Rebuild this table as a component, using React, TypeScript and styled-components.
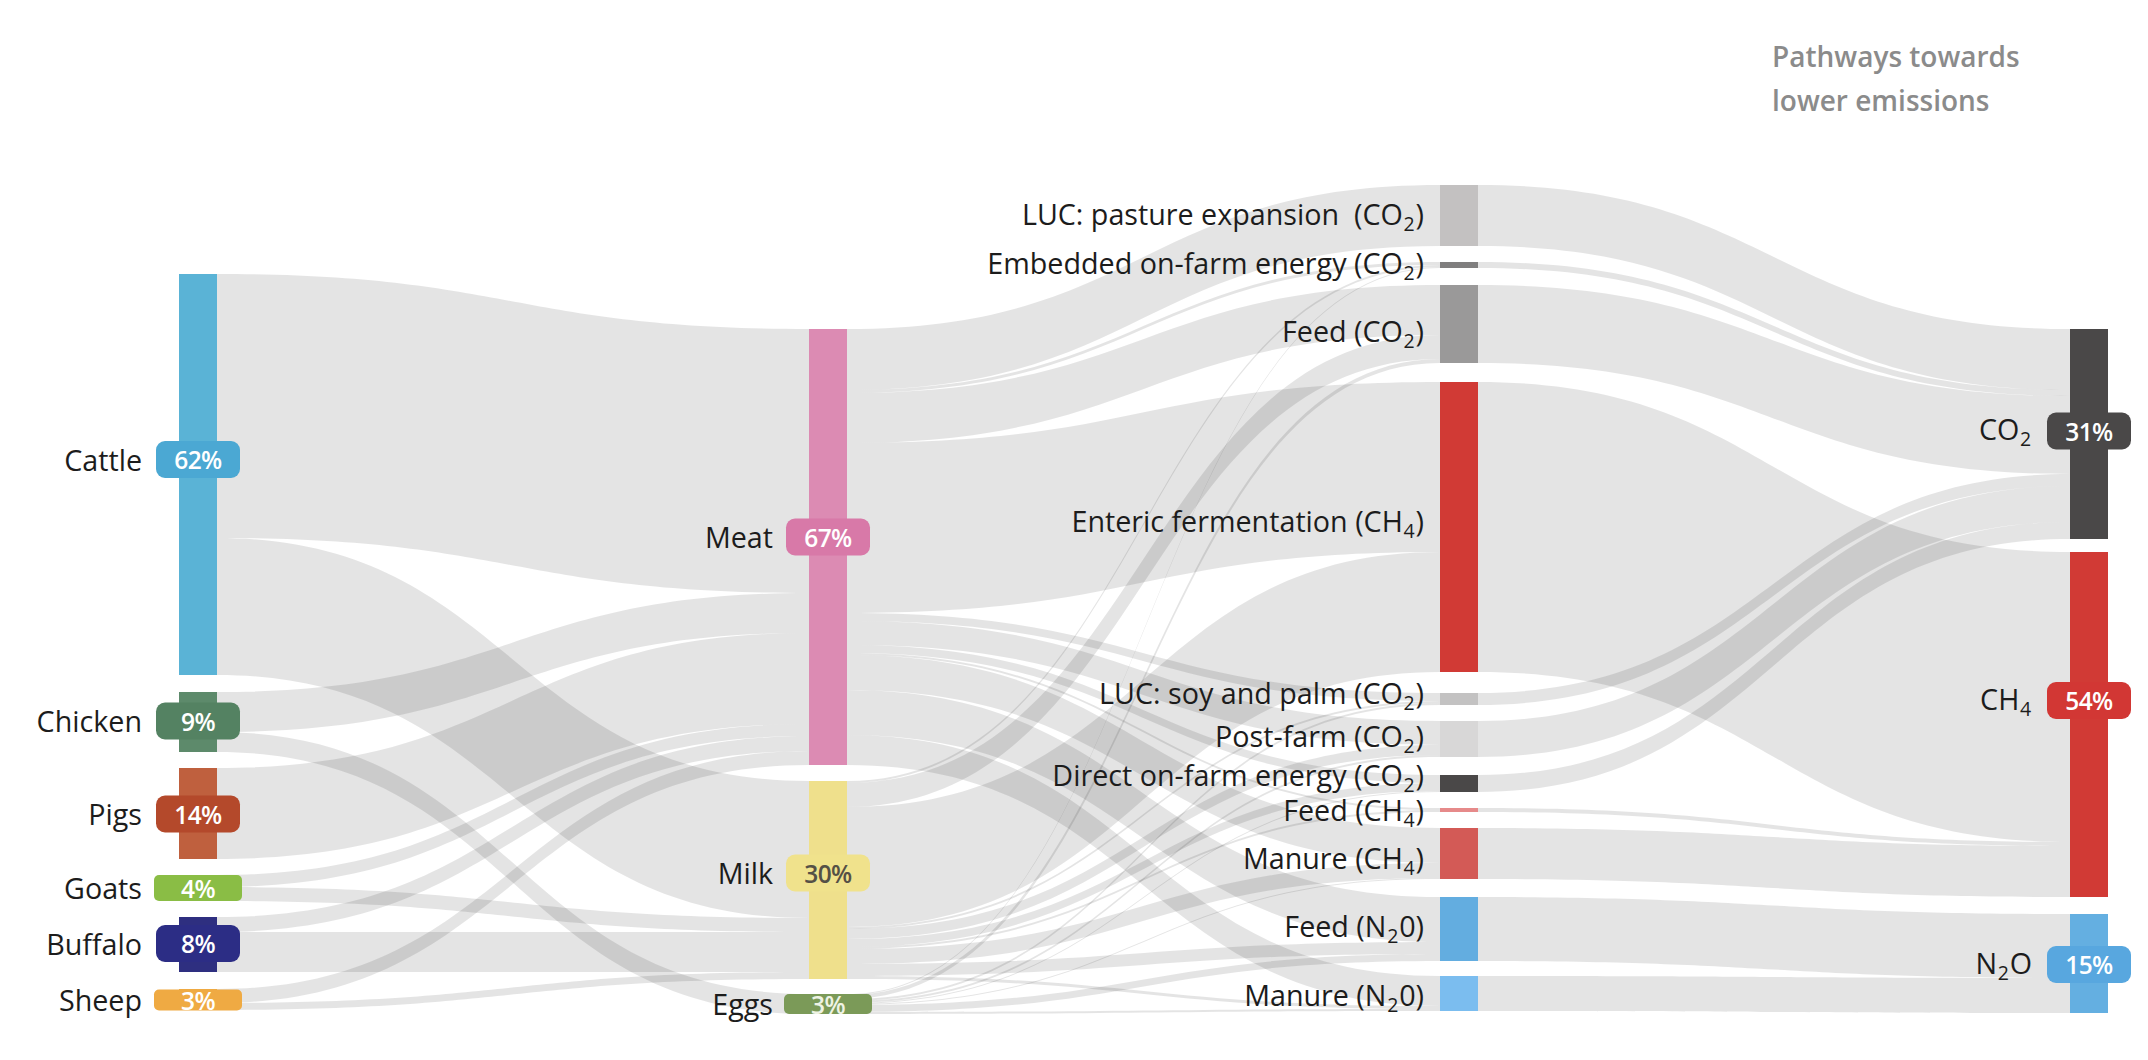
import React from "react";
import styled, { createGlobalStyle } from "styled-components";

const GlobalStyle = createGlobalStyle`
  html, body { margin: 0; padding: 0; background: #ffffff; }
  body {
    font-family: "Open Sans", "Noto Sans", "Liberation Sans", sans-serif;
    color: #1c1c1c;
  }
`;

const PAGE_W = 2148;
const PAGE_H = 1060;
const HEADER_H = 150;
const BAR_W = 38;
const COL_X = [179, 809, 1440, 2070];

type Sub = { base: string; sub?: string; tail?: string };

type NodeDef = {
  id: string;
  col: number;
  y: number;
  ly?: number;
  label: Sub[];
  color: string;
  badge?: string;
  badgeColor?: string;
  badgeInk?: string;
};

const L = (base: string, sub?: string, tail?: string): Sub[] => [{ base, sub, tail }];

const NODES: NodeDef[] = [
  { id: "cattle", col: 0, y: 274, ly: 459, label: L("Cattle"), color: "#5ab3d6", badge: "62%", badgeColor: "#4ba8d3" },
  { id: "chicken", col: 0, y: 692, ly: 721, label: L("Chicken"), color: "#5d8a6b", badge: "9%", badgeColor: "#548262" },
  { id: "pigs", col: 0, y: 768, label: L("Pigs"), color: "#bf603e", badge: "14%", badgeColor: "#b4492b" },
  { id: "goats", col: 0, y: 875, label: L("Goats"), color: "#8dbe46", badge: "4%", badgeColor: "#8abd45" },
  { id: "buffalo", col: 0, y: 917, ly: 943, label: L("Buffalo"), color: "#2e2f80", badge: "8%", badgeColor: "#2c2d85" },
  { id: "sheep", col: 0, y: 989, label: L("Sheep"), color: "#efaa43", badge: "3%", badgeColor: "#efaa43" },

  { id: "meat", col: 1, y: 329, ly: 537, label: L("Meat"), color: "#dc8bb3", badge: "67%", badgeColor: "#d879a8" },
  { id: "milk", col: 1, y: 781, ly: 873, label: L("Milk"), color: "#efe08c", badge: "30%", badgeColor: "#f0e28c", badgeInk: "#555046" },
  { id: "eggs", col: 1, y: 994, label: L("Eggs"), color: "#7d9a5a", badge: "3%", badgeColor: "#7b9a58", badgeInk: "#eef3e4" },

  { id: "lucp", col: 2, y: 185, ly: 215, label: L("LUC: pasture expansion\u00a0\u00a0(CO", "2", ")"), color: "#c3c1c1" },
  { id: "emb", col: 2, y: 262, ly: 265, label: L("Embedded on-farm energy (CO", "2", ")"), color: "#7f7e7e" },
  { id: "feedco2", col: 2, y: 285, ly: 333, label: L("Feed (CO", "2", ")"), color: "#9a9999" },
  { id: "enteric", col: 2, y: 382, ly: 523, label: L("Enteric fermentation (CH", "4", ")"), color: "#d13a35" },
  { id: "lucsoy", col: 2, y: 693, ly: 695, label: L("LUC: soy and palm (CO", "2", ")"), color: "#c3c2c2" },
  { id: "post", col: 2, y: 721, ly: 738, label: L("Post-farm (CO", "2", ")"), color: "#d8d7d7" },
  { id: "direct", col: 2, y: 775, ly: 776, label: L("Direct on-farm energy (CO", "2", ")"), color: "#4a4848" },
  { id: "feedch4", col: 2, y: 808, ly: 812, label: L("Feed (CH", "4", ")"), color: "#e68a8a" },
  { id: "manch4", col: 2, y: 828, ly: 859, label: L("Manure (CH", "4", ")"), color: "#d35a56" },
  { id: "feedn2o", col: 2, y: 897, ly: 928, label: L("Feed (N", "2", "0)"), color: "#63ade0" },
  { id: "mann2o", col: 2, y: 976, ly: 996, label: L("Manure (N", "2", "0)"), color: "#7bbdef" },

  { id: "co2", col: 3, y: 329, ly: 431, label: L("CO", "2"), color: "#4a4848", badge: "31%", badgeColor: "#4a4848" },
  { id: "ch4", col: 3, y: 552, ly: 700, label: L("CH", "4"), color: "#d13a35", badge: "54%", badgeColor: "#d23734" },
  { id: "n2o", col: 3, y: 914, ly: 964, label: L("N", "2", "O"), color: "#64afe1", badge: "15%", badgeColor: "#58a7df" },
];

const LINKS: [string, string, number][] = [
  ["cattle", "meat", 264],
  ["cattle", "milk", 137],
  ["chicken", "meat", 40],
  ["chicken", "eggs", 20],
  ["pigs", "meat", 91],
  ["goats", "meat", 12],
  ["goats", "milk", 14],
  ["buffalo", "meat", 15],
  ["buffalo", "milk", 40],
  ["sheep", "meat", 14],
  ["sheep", "milk", 7],

  ["meat", "lucp", 61],
  ["meat", "emb", 3],
  ["milk", "emb", 2],
  ["eggs", "emb", 1],
  ["meat", "feedco2", 50],
  ["milk", "feedco2", 24],
  ["eggs", "feedco2", 4],
  ["meat", "enteric", 170],
  ["milk", "enteric", 120],
  ["meat", "lucsoy", 8],
  ["milk", "lucsoy", 2],
  ["eggs", "lucsoy", 2],
  ["meat", "post", 24],
  ["milk", "post", 10],
  ["eggs", "post", 2],
  ["meat", "direct", 8],
  ["milk", "direct", 8],
  ["eggs", "direct", 1],
  ["meat", "feedch4", 2],
  ["milk", "feedch4", 2],
  ["meat", "manch4", 35],
  ["milk", "manch4", 15],
  ["eggs", "manch4", 1],
  ["meat", "feedn2o", 45],
  ["milk", "feedn2o", 12],
  ["eggs", "feedn2o", 7],
  ["meat", "mann2o", 30],
  ["milk", "mann2o", 3],
  ["eggs", "mann2o", 2],

  ["lucp", "co2", 61],
  ["emb", "co2", 6],
  ["feedco2", "co2", 78],
  ["lucsoy", "co2", 12],
  ["post", "co2", 36],
  ["direct", "co2", 17],
  ["enteric", "ch4", 290],
  ["feedch4", "ch4", 4],
  ["manch4", "ch4", 51],
  ["feedn2o", "n2o", 64],
  ["mann2o", "n2o", 35],
];

type LaidNode = NodeDef & { x: number; top: number; h: number; dy: number };
type LaidLink = { d: string; key: string };

function layout() {
  const byId: Record<string, LaidNode> = {};
  NODES.forEach((n) => {
    const inSum = LINKS.filter((l) => l[1] === n.id).reduce((a, l) => a + l[2], 0);
    const outSum = LINKS.filter((l) => l[0] === n.id).reduce((a, l) => a + l[2], 0);
    const h = Math.max(inSum, outSum);
    const mid = n.y + h / 2;
    byId[n.id] = {
      ...n,
      x: COL_X[n.col],
      top: n.y - HEADER_H,
      h,
      dy: n.ly !== undefined ? n.ly - mid : 0,
    };
  });
  const sOff: Record<string, number> = {};
  const tOff: Record<string, number> = {};
  const withIdx = LINKS.map((l, i) => ({ s: byId[l[0]], t: byId[l[1]], v: l[2], i }));
  const sy: number[] = [];
  const ty: number[] = [];
  NODES.forEach((n) => {
    sOff[n.id] = 0;
    tOff[n.id] = 0;
    withIdx
      .filter((l) => l.s.id === n.id)
      .sort((a, b) => a.t.top - b.t.top)
      .forEach((l) => {
        sy[l.i] = byId[n.id].top + sOff[n.id];
        sOff[n.id] += l.v;
      });
    withIdx
      .filter((l) => l.t.id === n.id)
      .sort((a, b) => a.s.top - b.s.top)
      .forEach((l) => {
        ty[l.i] = byId[n.id].top + tOff[n.id];
        tOff[n.id] += l.v;
      });
  });
  const links: LaidLink[] = withIdx.map((l) => {
    const x0 = l.s.x + BAR_W;
    const x1 = l.t.x;
    const xm = (x0 + x1) / 2;
    const a = sy[l.i];
    const b = ty[l.i];
    const w = l.v;
    const d = `M${x0},${a} C${xm},${a} ${xm},${b} ${x1},${b} L${x1},${b + w} C${xm},${b + w} ${xm},${a + w} ${x0},${a + w} Z`;
    return { d, key: `${l.s.id}-${l.t.id}` };
  });
  return { nodes: NODES.map((n) => byId[n.id]), links };
}

const Page = styled.div`
  width: ${PAGE_W}px;
  height: ${PAGE_H}px;
  display: flex;
  flex-direction: column;
  overflow: hidden;
  background: #ffffff;
`;

const Header = styled.header`
  height: ${HEADER_H}px;
  flex: none;
  display: flex;
  justify-content: flex-end;
  box-sizing: border-box;
  padding: 34px 0 0 0;
`;

const Title = styled.h2`
  margin: 0;
  width: 376px;
  font-size: 28px;
  line-height: 44px;
  font-weight: 600;
  color: #8b8b8b;
  letter-spacing: 0;
`;

const Chart = styled.div`
  position: relative;
  flex: 1;
`;

const Flows = styled.svg`
  position: absolute;
  inset: 0;
  display: block;
`;

const Flow = styled.path`
  fill: #000000;
  fill-opacity: 0.105;
`;

const Bar = styled.div<{ $color: string }>`
  position: absolute;
  width: ${BAR_W}px;
  background: ${(p) => p.$color};
`;

const Label = styled.div<{ $gap: number }>`
  position: absolute;
  right: calc(100% + ${(p) => p.$gap}px);
  top: 50%;
  white-space: nowrap;
  font-size: 28.7px;
  line-height: 34px;
  color: #1c1c1c;
  letter-spacing: 0;
`;

const Subscript = styled.span`
  font-size: 0.68em;
  position: relative;
  top: 0.32em;
  margin: 0 0.04em;
`;

const Badge = styled.div<{ $bg: string; $ink: string; $h: number }>`
  position: absolute;
  left: 50%;
  top: 50%;
  width: ${(p) => (p.$h < 37 ? 88 : 84)}px;
  height: ${(p) => Math.min(p.$h, 37)}px;
  border-radius: ${(p) => (p.$h < 37 ? 5 : 9)}px;
  background: ${(p) => p.$bg};
  color: ${(p) => p.$ink};
  display: flex;
  align-items: center;
  justify-content: center;
  font-size: 24.5px;
  font-weight: 600;
  letter-spacing: -0.6px;
`;

const LABEL_GAP = [37, 36, 16, 38];

function Text({ parts }: { parts: Sub[] }) {
  return (
    <>
      {parts.map((p, i) => (
        <React.Fragment key={i}>
          {p.base}
          {p.sub && <Subscript>{p.sub}</Subscript>}
          {p.tail}
        </React.Fragment>
      ))}
    </>
  );
}

export default function App() {
  const { nodes, links } = layout();
  const chartH = PAGE_H - HEADER_H;
  return (
    <Page>
      <GlobalStyle />
      <Header>
        <Title>
          Pathways towards
          <br />
          lower emissions
        </Title>
      </Header>
      <Chart>
        <Flows width={PAGE_W} height={chartH} viewBox={`0 0 ${PAGE_W} ${chartH}`}>
          {links.map((l) => (
            <Flow key={l.key} d={l.d} />
          ))}
        </Flows>
        {nodes.map((n) => (
          <Bar key={n.id} $color={n.color} style={{ left: n.x, top: n.top, height: n.h }}>
            <Label $gap={LABEL_GAP[n.col]} style={{ transform: `translateY(calc(-50% + ${n.dy}px))` }}>
              <Text parts={n.label} />
            </Label>
            {n.badge && (
              <Badge
                $bg={n.badgeColor || n.color}
                $ink={n.badgeInk || "#ffffff"}
                $h={n.h}
                style={{ transform: `translate(-50%, calc(-50% + ${n.dy}px))` }}
              >
                {n.badge}
              </Badge>
            )}
          </Bar>
        ))}
      </Chart>
    </Page>
  );
}
